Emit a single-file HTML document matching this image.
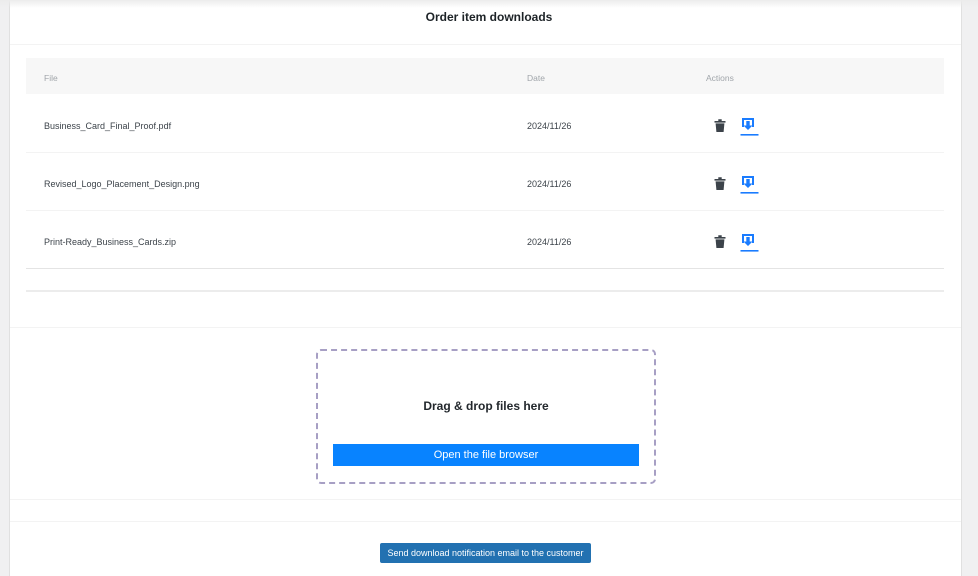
<!DOCTYPE html>
<html><head><style>
*{margin:0;padding:0;box-sizing:border-box}
body{width:978px;height:576px;background:#f0f0f1;position:relative;overflow:hidden;font-family:"Liberation Sans",sans-serif;color:#3c434a}
.card{position:absolute;left:9px;top:0;width:953px;height:576px;background:#fff;border-left:1px solid #e0e0e0;border-right:1px solid #e0e0e0}
.a{position:absolute}
.hl{position:absolute;height:1px;background:#f3f3f3}
.t{font-size:9px;color:#3c434a}
</style></head><body>
<div class="card"></div>
<div class="a" style="left:0;top:0;width:978px;height:8px;background:linear-gradient(#ececec,rgba(255,255,255,0))"></div>
<div class="a" style="left:0;top:9px;width:978px;text-align:center;font-size:12px;font-weight:bold;color:#1d2327;line-height:16px">Order item downloads</div>
<div class="hl" style="left:10px;width:951px;top:44px"></div>
<div class="a" style="left:26px;top:58px;width:918px;height:36px;background:#f7f7f7"></div>
<div class="a t" style="left:44px;top:73px;color:#a0a5aa;font-size:8.5px">File</div>
<div class="a t" style="left:527px;top:73px;color:#a0a5aa;font-size:8.5px">Date</div>
<div class="a t" style="left:706px;top:73px;color:#a0a5aa;font-size:8.5px">Actions</div>

<div class="a t" style="left:44px;top:121px">Business_Card_Final_Proof.pdf</div>
<div class="a t" style="left:527px;top:121px">2024/11/26</div>
<div class="hl" style="left:26px;width:918px;top:152px"></div>
<div class="a t" style="left:44px;top:179px">Revised_Logo_Placement_Design.png</div>
<div class="a t" style="left:527px;top:179px">2024/11/26</div>
<div class="hl" style="left:26px;width:918px;top:210px"></div>
<div class="a t" style="left:44px;top:237px">Print-Ready_Business_Cards.zip</div>
<div class="a t" style="left:527px;top:237px">2024/11/26</div>
<div class="hl" style="left:26px;width:918px;top:268px;background:#e4e4e4"></div>
<div class="hl" style="left:26px;width:918px;top:290px;height:2px;background:#ececec"></div>
<div class="hl" style="left:10px;width:951px;top:327px"></div>

<svg class="a" style="left:711px;top:117px" width="52" height="140" viewBox="0 0 50 140">
<g id="r">
<path d="M2.5 4h11v1.6h-11z M6.3 2.3h3.4v1.7h-3.4z M3.6 6.4h8.8l-.8 8.6h-7.2z" fill="#3c434a"/>
<path d="M30 1h12v9h-2V3h-8v7h-2z" fill="#1a7cff"/>
<path d="M34.3 4h3.4v4.5h2.8l-4.5 4.5-4.5-4.5h2.8z" fill="#1a7cff"/>
<rect x="28.5" y="17" width="18" height="1.6" fill="#1a7cff"/>
</g>
<use href="#r" y="58"/>
<use href="#r" y="116"/>
</svg>

<div class="a" style="left:316px;top:349px;width:340px;height:135px;border:2.5px dashed #a79fc4;border-radius:5px"></div>
<div class="a" style="left:316px;top:399px;width:340px;text-align:center;font-size:12px;font-weight:bold;color:#23282d">Drag &amp; drop files here</div>
<div class="a" style="left:333px;top:444px;width:306px;height:22px;background:#0883ff;color:#fff;font-size:11px;text-align:center;line-height:23px">Open the file browser</div>
<div class="hl" style="left:10px;width:951px;top:499px"></div>
<div class="hl" style="left:10px;width:951px;top:521px"></div>
<div class="a" style="left:380px;top:543px;width:211px;height:20px;background:#2271b1;border-radius:2px;color:#fff;font-size:9px;text-align:center;line-height:20px">Send download notification email to the customer</div>
</body></html>
